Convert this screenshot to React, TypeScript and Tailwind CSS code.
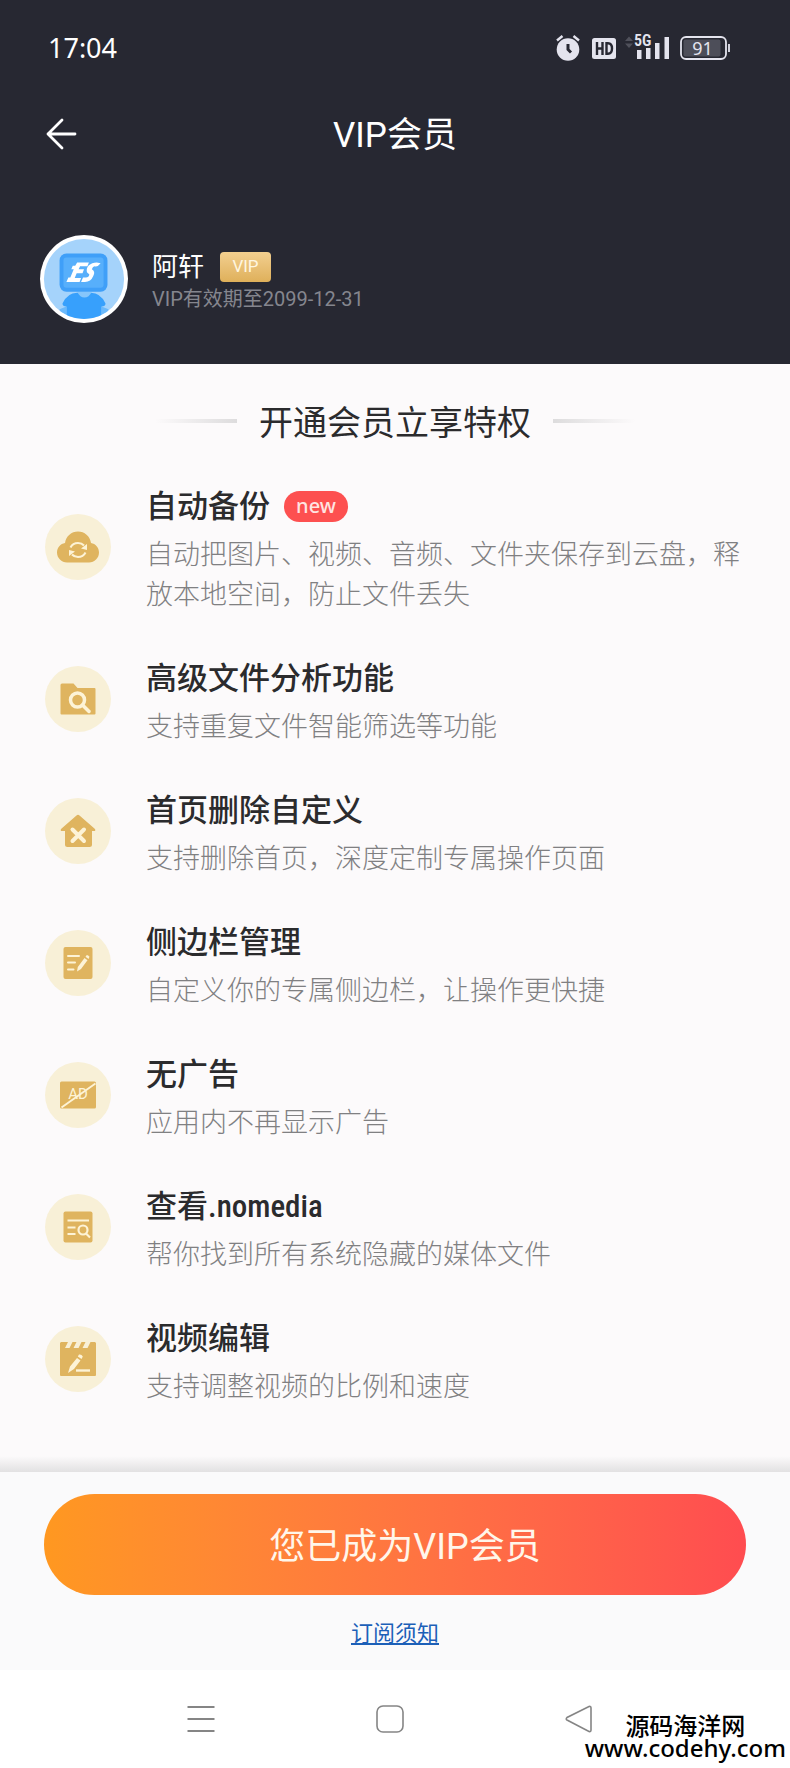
import type { ReactNode } from 'react';

interface Feature {
  title: ReactNode;
  desc: string;
  icon: ReactNode;
  isNew?: boolean;
}

const GOLD = '#dfb45f';
const CREAM = '#fdf3d6';

function CloudSyncIcon() {
  return (
    <svg viewBox="0 0 44 32" className="w-11 h-8">
      <path
        d="M11 31.500C5.500 31.500 1 27 1 21.500C1 16.500 4.500 12.800 9 12C10 5 15.500 0.500 22 0.500S34 5 35 12C39.500 12.800 43 16.500 43 21.500C43 27 38.500 31.500 33 31.500Z"
        fill={GOLD}
      />
      <g fill="none" stroke={CREAM} strokeWidth="2">
        <path d="M14.500 16.500C16 13.500 19 12 22 12C24.500 12 26.500 12.800 28 14.500" />
        <path d="M29.500 21.500C28 24.500 25 26 22 26C19.500 26 17.500 25.200 16 23.500" />
      </g>
      <path d="M31 13V19L25 17.500Z" fill={CREAM} />
      <path d="M13 25V19L19 20.500Z" fill={CREAM} />
    </svg>
  );
}

function FolderSearchIcon() {
  return (
    <svg viewBox="0 0 36 32" className="w-9 h-8">
      <path d="M2 0.500H13.500L17.500 5H34.500Q35.500 5 35.500 6V30.500Q35.500 31.500 34.500 31.500H1.500Q0.500 31.500 0.500 30.500V2Q0.500 0.500 2 0.500Z" fill={GOLD} />
      <circle cx="17.500" cy="17" r="7" fill="none" stroke={CREAM} strokeWidth="3.500" />
      <path d="M22.500 22L29 28.500" stroke={CREAM} strokeWidth="3.500" strokeLinecap="round" />
    </svg>
  );
}

function HomeRemoveIcon() {
  return (
    <svg viewBox="0 0 36 34" className="w-9 h-[34px]">
      <path d="M16.500 1.500Q18 0 19.500 1.500L35 15Q36 17 34 17H32V30.500Q32 33 29.500 33H7.500Q5 33 5 30.500V17H2Q0 17 1 15Z" fill={GOLD} />
      <path d="M12.500 15.500L24 27M24 15.500L12.500 27" stroke={CREAM} strokeWidth="4" strokeLinecap="round" />
    </svg>
  );
}

function ListEditIcon() {
  return (
    <svg viewBox="0 0 30 32" className="w-[30px] h-8">
      <rect x="0.500" width="29" height="32" rx="2" fill={GOLD} />
      <path d="M5 9H16M5 15.500H12M5 22.500H10.500" stroke={CREAM} strokeWidth="2" strokeLinecap="round" />
      <path d="M21.500 11L24.500 13.300L18 22L14 24.500L14.800 20ZM22.500 9.700L23.800 8Q25.200 8 26.500 9.700L25.500 12Z" fill={CREAM} />
    </svg>
  );
}

function NoAdIcon() {
  return (
    <svg viewBox="0 0 36 28" className="w-9 h-7">
      <rect y="0.500" width="36" height="27" rx="1.500" fill={GOLD} />
      <text x="18" y="18" textAnchor="middle" fontSize="15" fill={CREAM} className="font-['Roboto',sans-serif]">AD</text>
      <path d="M1.500 26.500L35.500 2.500" stroke={CREAM} strokeWidth="2" />
    </svg>
  );
}

function ListSearchIcon() {
  return (
    <svg viewBox="0 0 30 32" className="w-[30px] h-8">
      <rect x="0.500" y="0.500" width="29" height="31" rx="2" fill={GOLD} />
      <path d="M4.500 9.500H26M4.500 16.500H12.500M4.500 23H12.500" stroke={CREAM} strokeWidth="2" />
      <circle cx="20" cy="19" r="4.500" fill="none" stroke={CREAM} strokeWidth="2.200" />
      <path d="M23 22.500L27 26.500" stroke={CREAM} strokeWidth="2.200" />
    </svg>
  );
}

function VideoEditIcon() {
  return (
    <svg viewBox="0 0 36 36" className="w-9 h-9">
      <path d="M1 1H8L5 7H9.500L12.500 1H16.500L13.500 7H18.500L21.500 1H25.500L22.500 7H27.500L30.500 1H35L36 2V34Q36 35 35 35H1Q0 35 0 34V2Z" fill={GOLD} />
      <path d="M17 17L20.500 19.500L14 28L8 32L10 25.500ZM17.800 15.500L19 13.500Q21.500 13 22.800 15.500L21.500 18Z" fill={CREAM} />
      <path d="M16 29.500H30" stroke={CREAM} strokeWidth="2.400" />
    </svg>
  );
}

const features: Feature[] = [
  { title: '自动备份', desc: '自动把图片、视频、音频、文件夹保存到云盘，释放本地空间，防止文件丢失', icon: <CloudSyncIcon />, isNew: true },
  { title: '高级文件分析功能', desc: '支持重复文件智能筛选等功能', icon: <FolderSearchIcon /> },
  { title: '首页删除自定义', desc: '支持删除首页，深度定制专属操作页面', icon: <HomeRemoveIcon /> },
  { title: '侧边栏管理', desc: '自定义你的专属侧边栏，让操作更快捷', icon: <ListEditIcon /> },
  { title: '无广告', desc: '应用内不再显示广告', icon: <NoAdIcon /> },
  {
    title: (
      <>
        查看<span className="font-['Roboto_Condensed','Roboto',sans-serif]">.nomedia</span>
      </>
    ),
    desc: '帮你找到所有系统隐藏的媒体文件',
    icon: <ListSearchIcon />,
  },
  { title: '视频编辑', desc: '支持调整视频的比例和速度', icon: <VideoEditIcon /> },
];

function StatusBar() {
  return (
    <div className="flex items-center justify-between h-24 pl-12 pr-[60px] text-[#e4e4ee]">
      <span className="font-['Noto_Sans',sans-serif] text-[27px] text-white">17:04</span>
      <div className="flex items-center">
        <svg viewBox="0 0 24 26" className="w-6 h-[26px]">
          <circle cx="12" cy="14.500" r="11.300" fill="currentColor" />
          <path d="M1 5.500L6.500 1M23 5.500L17.500 1" stroke="currentColor" strokeWidth="2.400" />
          <path d="M12 9V14.500L15 17.500" fill="none" stroke="#272832" strokeWidth="3" />
        </svg>
        <svg viewBox="0 0 24 21" className="w-6 h-[21px] ml-3">
          <rect width="24" height="21" rx="2.500" fill="currentColor" />
          <path d="M5 4V17M10.500 4V17M5 10.500H10.500M14.500 5.200V15.800H16Q20 15.800 20 10.500T16 5.200Z" fill="none" stroke="#272832" strokeWidth="2.400" />
        </svg>
        <svg viewBox="0 -6 46 40" className="w-[46px] h-10 ml-2">
          <path d="M1 7L5 2.500L9 7ZM1 9.500L5 14L9 9.500Z" fill="#50515b" />
          <text x="10" y="12" fontSize="16" fontWeight="600" fill="currentColor" className="font-['Roboto_Condensed','Roboto',sans-serif]">5G</text>
          <path d="M13 16H17.500V25H13ZM22 14H26.500V25H22ZM31 9H35.500V25H31ZM40.500 3H45V25H40.500Z" fill="currentColor" />
        </svg>
        <svg viewBox="0 0 50 24" className="w-[50px] h-6 ml-[10px]">
          <rect x="1" y="1" width="45" height="22" rx="5" fill="none" stroke="currentColor" strokeWidth="1.800" />
          <rect x="3.500" y="3.500" width="37" height="17" rx="2" fill="#4d4e59" />
          <path d="M49 8V16" stroke="currentColor" strokeWidth="1.800" />
          <text x="22.500" y="18.500" textAnchor="middle" fontSize="18" fill="currentColor" className="font-['Noto_Sans',sans-serif]">91</text>
        </svg>
      </div>
    </div>
  );
}

function Avatar() {
  return (
    <svg viewBox="0 0 90 90" className="size-[88px]" role="img" aria-label="头像">
      <defs>
        <clipPath id="avatar-clip">
          <circle cx="45" cy="45" r="41" />
        </clipPath>
      </defs>
      <circle cx="45" cy="45" r="45" fill="#fff" />
      <circle cx="45" cy="45" r="41" fill="#a5d3fb" />
      <g clipPath="url(#avatar-clip)">
        <path d="M27 90V73Q23 73 23 70Q28 59 38 59H52Q62 59 67 70Q67 73 63 73V90Z" fill="#37a0fc" />
        <path d="M27 73V90H20V76ZM63 73V90H70V76Z" fill="#6bb9fb" />
        <path d="M38 58H53Q50 64 45.500 64T38 58Z" fill="#86c6fb" />
        <rect x="20" y="19" width="49" height="39" rx="7" fill="#3f9ff8" />
        <rect x="24" y="23" width="41" height="31" rx="3" fill="#57affb" />
      </g>
      <path d="M38 28H50L48.500 32H41L39.500 35H45L43.500 39H37.500L35.500 44H42L40.500 48H27L29 43.500H31L34.500 35H32L33.500 31.500H36Z" fill="#fff" />
      <path d="M62 29Q59 33 56 32Q54 32 53 35Q57 37 54.500 42Q52 48 46 48H42L44 43.500H47Q50 43.500 50.500 40.500L48 38Q47 34 50 31Q53 28 58 28Z" fill="#fff" />
    </svg>
  );
}

function FeatureRow({ feature }: { feature: Feature }) {
  return (
    <li className="flex items-center gap-[35px]">
      <div className="flex items-center justify-center shrink-0 size-[66px] rounded-full bg-[#f8f0d7]">{feature.icon}</div>
      <div className="flex-1 pt-[6px]">
        <h3 className="flex items-center text-[31px] leading-[46px] font-medium text-[#2b2b2d]">
          <span>{feature.title}</span>
          {feature.isNew && (
            <span className="flex items-center justify-center w-16 h-[31px] ml-[14px] mb-[2px] rounded-full bg-[#fd5050] font-['Noto_Sans',sans-serif] text-xl font-medium text-[#ffe4e1]">
              new
            </span>
          )}
        </h3>
        <p className="mt-[5px] text-[27px] leading-10 font-light text-[#808082]">{feature.desc}</p>
      </div>
    </li>
  );
}

export default function App() {
  return (
    <div className="relative bg-[#fcfafb] font-['Roboto','Noto_Sans_CJK_SC',sans-serif]">
      <header className="bg-[#272832] pb-[41px] text-white">
        <StatusBar />
        <div className="grid grid-cols-[60px_1fr_60px] items-center h-[76px] px-[45px]">
          <button type="button" aria-label="返回" className="w-8">
            <svg viewBox="0 0 32 32" className="size-8">
              <path d="M17 2L3 16L17 30M3 16H30" fill="none" stroke="currentColor" strokeWidth="2.800" strokeLinecap="round" strokeLinejoin="round" />
            </svg>
          </button>
          <h1 className="pt-[3px] text-center text-[35px] leading-[46px]">VIP会员</h1>
        </div>
        <div className="flex items-center gap-6 mt-[63px] px-10">
          <Avatar />
          <div className="pt-1">
            <div className="flex items-center gap-4">
              <span className="text-[26px] leading-9">阿轩</span>
              <span className="flex items-center justify-center w-[51px] h-[30px] rounded-sm bg-linear-to-b from-[#f2cf8f] to-[#dfb05a] text-[17px] text-[#fff6e0]">
                VIP
              </span>
            </div>
            <p className="text-xl leading-7 text-[#85868e]">VIP有效期至2099-12-31</p>
          </div>
        </div>
      </header>

      <main className="px-[45px] pt-[35px] pb-[49px]">
        <div className="flex items-center justify-center gap-[22px]">
          <span className="w-[82px] h-1 mb-1 bg-linear-to-r from-transparent to-[#dddcdd]" />
          <h2 className="text-[34px] leading-[48px] text-[#2b2b2d]">开通会员立享特权</h2>
          <span className="w-[82px] h-1 mb-1 bg-linear-to-l from-transparent to-[#dddcdd]" />
        </div>
        <ul className="flex flex-col gap-[35px] mt-[31px]">
          {features.map((f) => (
            <FeatureRow key={f.desc} feature={f} />
          ))}
        </ul>
      </main>

      <div className="h-4 bg-linear-to-b from-transparent to-[#e2e1e2]" />
      <footer className="flex flex-col items-center bg-[#fafafb] px-[44px] pt-[22px] pb-5">
        <button
          type="button"
          className="w-full h-[101px] pt-1 pl-5 rounded-full bg-linear-to-r from-[#ff9820] to-[#ff4c50] text-[36px] text-[#fff6ea]"
        >
          您已成为VIP会员
        </button>
        <a href="#terms" className="mt-[23px] text-[22px] leading-8 text-[#1c60b8] underline">
          订阅须知
        </a>
      </footer>

      <nav className="flex items-center justify-center gap-[161px] h-[97px] pr-[10px] bg-white text-[#858585]">
        <button type="button" aria-label="最近任务">
          <svg viewBox="0 0 28 28" className="size-7">
            <path d="M0.500 2H27.500M0.500 14H27.500M0.500 26H27.500" stroke="currentColor" strokeWidth="2" />
          </svg>
        </button>
        <button type="button" aria-label="主屏幕">
          <svg viewBox="0 0 28 28" className="size-7">
            <rect x="1" y="1" width="26" height="26" rx="6" fill="none" stroke="currentColor" strokeWidth="1.600" />
          </svg>
        </button>
        <button type="button" aria-label="返回上一页">
          <svg viewBox="0 0 28 28" className="size-7">
            <path d="M2 12.500Q0.500 14 2 15L24 26.500Q26 27 26 25V3Q26 1 24 1.500Z" fill="none" stroke="currentColor" strokeWidth="1.600" />
          </svg>
        </button>
      </nav>

      <div className="absolute right-1 bottom-2 flex flex-col items-center font-['Noto_Sans','Noto_Sans_CJK_SC',sans-serif] text-2xl leading-[22px] font-medium text-black">
        <span>源码海洋网</span>
        <span>www.codehy.com</span>
      </div>
    </div>
  );
}
